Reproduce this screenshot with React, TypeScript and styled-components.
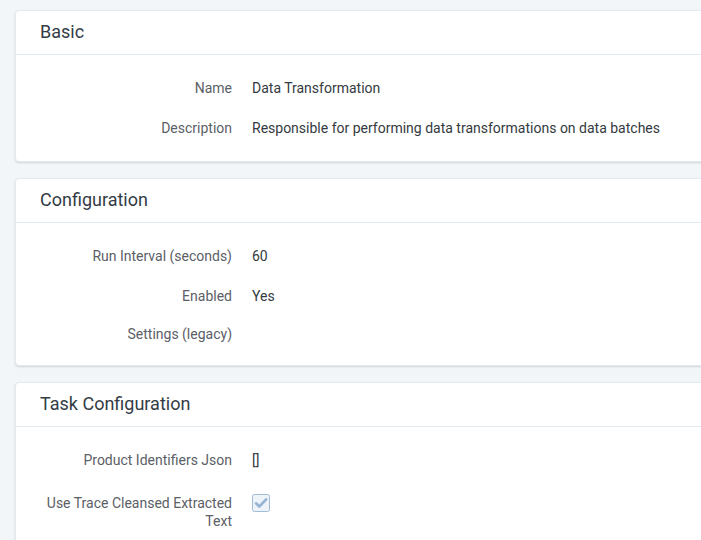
import React from "react";
import styled, { createGlobalStyle } from "styled-components";

const Global = createGlobalStyle`
  html, body { margin: 0; padding: 0; overflow: hidden; background: #f3f6f9; }
  body { font-family: Roboto, "Liberation Sans", Arial, sans-serif; }
`;

const Page = styled.div`
  display: flex;
  flex-direction: column;
  gap: 16px;
  padding: 10px 0 0 15px;
  width: 780px;
`;

const Card = styled.section`
  background: #ffffff;
  border: 1px solid #e4e9ee;
  border-radius: 4px;
  box-shadow: 0 1px 2px rgba(40, 60, 80, 0.18);
`;

const CardHeader = styled.header`
  padding: 9px 24px 10px;
  border-bottom: 1px solid #e2eaf1;
  font-size: 18px;
  line-height: 24px;
  color: #333c45;
`;

const CardBody = styled.div`
  padding: 16px 15px 16px;
  display: flex;
  flex-direction: column;
  gap: 6px;
`;

const Row = styled.div`
  display: flex;
  align-items: flex-start;
  gap: 20px;
`;

const Label = styled.div<{ $pt: number; $pb: number }>`
  width: 201px;
  flex: none;
  text-align: right;
  font-size: 14px;
  line-height: 18px;
  color: #5b6066;
  padding: ${(p) => p.$pt}px 0 ${(p) => p.$pb}px;
`;

const Value = styled.div`
  font-size: 14px;
  line-height: 18px;
  color: #343a40;
  padding: 8px 0;
`;

const CheckWrap = styled.div`
  padding-top: 11px;
  display: flex;
`;

const Check = () => (
  <svg width="18" height="18" viewBox="0 0 18 18">
    <rect x="0.5" y="0.5" width="17" height="17" rx="2" fill="#edf3f9" stroke="#9fbbd6" />
    <path d="M4 9.3 L7.3 12.5 L14.2 5.4" fill="none" stroke="#95b4d3" strokeWidth="2.6" strokeLinecap="round" strokeLinejoin="round" />
  </svg>
);

type Item = { label: string; value?: string; check?: boolean };

const Field = ({ item }: { item: Item }) => {
  if (item.check) {
    return (
      <Row>
        <Label $pt={11} $pb={0}>{item.label}</Label>
        <CheckWrap><Check /></CheckWrap>
      </Row>
    );
  }
  if (!item.value) {
    return (
      <Row>
        <Label $pt={6} $pb={6}>{item.label}</Label>
      </Row>
    );
  }
  return (
    <Row>
      <Label $pt={8} $pb={8}>{item.label}</Label>
      <Value>{item.value}</Value>
    </Row>
  );
};

const sections: { title: string; items: Item[] }[] = [
  {
    title: "Basic",
    items: [
      { label: "Name", value: "Data Transformation" },
      { label: "Description", value: "Responsible for performing data transformations on data batches" },
    ],
  },
  {
    title: "Configuration",
    items: [
      { label: "Run Interval (seconds)", value: "60" },
      { label: "Enabled", value: "Yes" },
      { label: "Settings (legacy)" },
    ],
  },
  {
    title: "Task Configuration",
    items: [
      { label: "Product Identifiers Json", value: "[]" },
      { label: "Use Trace Cleansed Extracted Text", check: true },
    ],
  },
];

export default function App() {
  return (
    <>
      <Global />
      <Page>
        {sections.map((s) => (
          <Card key={s.title}>
            <CardHeader>{s.title}</CardHeader>
            <CardBody>
              {s.items.map((it) => (
                <Field key={it.label} item={it} />
              ))}
            </CardBody>
          </Card>
        ))}
      </Page>
    </>
  );
}
